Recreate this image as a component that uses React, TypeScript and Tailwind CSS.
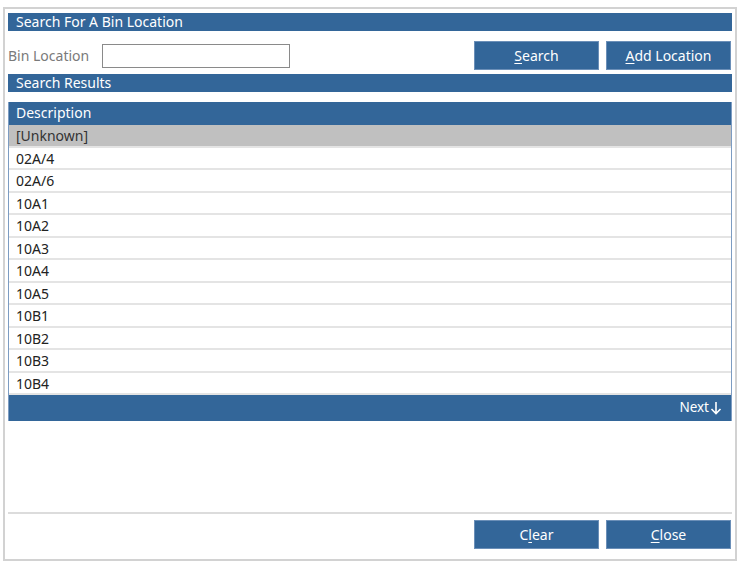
const rows = ['02A/4', '02A/6', '10A1', '10A2', '10A3', '10A4', '10A5', '10B1', '10B2', '10B3', '10B4'];

function Btn({ pre, u, post }: { pre: string; u: string; post: string }) {
  return (
    <button className="w-[125px] h-[29px] bg-[#336699] border border-[#6b8fb8] text-white text-[14px] leading-none">
      {pre}
      <span className="underline underline-offset-2">{u}</span>
      {post}
    </button>
  );
}

export default function App() {
  return (
    <div className="w-[739px] h-[562px] bg-white pt-[7px] pl-[3px] font-['Noto_Sans','Open_Sans',sans-serif]">
      <div className="w-[734px] h-[554px] border-2 border-[#d2d2d2] px-[3px] pt-[4px] flex flex-col">
        <div className="h-[18px] bg-[#336699] text-white text-[14px] leading-[18px] pl-[8px]">Search For A Bin Location</div>

        <div className="h-[29px] mt-[10px] flex items-center">
          <span className="text-[#7a7a7a] text-[14px] w-[94px]">Bin Location</span>
          <input className="w-[188px] h-[24px] border border-[#8a8a8a] bg-white outline-none" />
          <div className="ml-auto flex gap-[7px] mr-[1px]">
            <Btn pre="" u="S" post="earch" />
            <Btn pre="" u="A" post="dd Location" />
          </div>
        </div>

        <div className="h-[18px] mt-[4px] bg-[#336699] text-white text-[14px] leading-[18px] pl-[8px]">Search Results</div>

        <div className="mt-[10px] border-x border-[#7d9cc2]">
          <div className="h-[23px] bg-[#336699] text-white text-[14px] leading-[22px] pl-[7px]">Description</div>
          <div className="h-[22.5px] bg-[#c0c0c0] text-[#333] text-[14px] leading-[21px] pl-[7px] border-b-2 border-[#e4e4e4]">[Unknown]</div>
          {rows.map(r => (
            <div key={r} className="h-[22.5px] bg-white text-[#222] text-[14px] leading-[21px] pl-[7px] border-b-2 border-[#e4e4e4]">
              {r}
            </div>
          ))}
          <div className="h-[26px] bg-[#336699] text-white text-[13.5px] flex items-center justify-end pr-[9px]">
            <span className="leading-none">Next</span>
            <svg width="12" height="14" viewBox="0 0 12 14" className="ml-[1px]" fill="none" stroke="white" strokeWidth="1.6">
              <path d="M6 1v11.5M1.5 8l4.5 4.5L10.5 8" />
            </svg>
          </div>
        </div>

        <div className="flex-1" />
        <div className="h-[2px] bg-[#dcdcdc]" />
        <div className="h-[29px] mt-[6px] mb-[10px] flex justify-end gap-[7px] mr-[1px]">
          <Btn pre="C" u="l" post="ear" />
          <Btn pre="" u="C" post="lose" />
        </div>
      </div>
    </div>
  );
}
